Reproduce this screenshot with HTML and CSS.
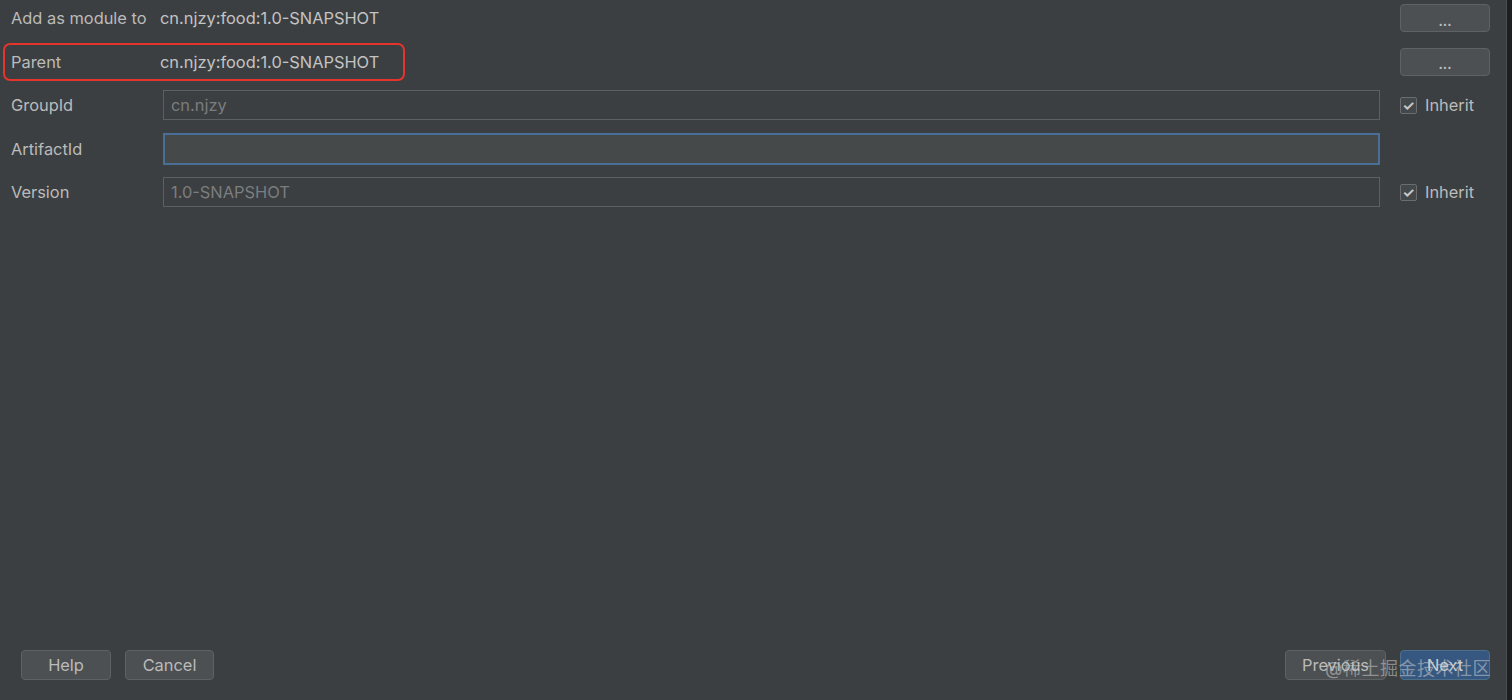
FILE: index.html
```html
<!DOCTYPE html>
<html lang="en">
<head>
    <meta charset="UTF-8">
    <meta name="viewport" content="width=device-width, initial-scale=1.0">
    <title>New Module</title>
    <link rel="stylesheet" href="styles.css">
</head>
<body>
    <div class="dialog">
        <div class="form">
            <div class="row">
                <span class="label">Add as module to</span>
                <span class="value">cn.njzy:food:1.0-SNAPSHOT</span>
                <div class="side"><button class="btn btn-dots">...</button></div>
            </div>

            <div class="row row-marked">
                <span class="label">Parent</span>
                <span class="value">cn.njzy:food:1.0-SNAPSHOT</span>
                <div class="side"><button class="btn btn-dots">...</button></div>
                <div class="mark"></div>
            </div>

            <div class="row">
                <label class="label" for="groupId">GroupId</label>
                <input class="field" id="groupId" type="text" value="cn.njzy" disabled>
                <div class="side">
                    <label class="check"><span class="box">&#10003;</span>Inherit</label>
                </div>
            </div>

            <div class="row">
                <label class="label" for="artifactId">ArtifactId</label>
                <input class="field field-focus" id="artifactId" type="text">
                <div class="side"></div>
            </div>

            <div class="row">
                <label class="label" for="version">Version</label>
                <input class="field" id="version" type="text" value="1.0-SNAPSHOT" disabled>
                <div class="side">
                    <label class="check"><span class="box">&#10003;</span>Inherit</label>
                </div>
            </div>
        </div>

        <div class="footer">
            <div class="group">
                <button class="btn btn-help">Help</button>
                <button class="btn btn-cancel">Cancel</button>
            </div>
            <div class="group">
                <button class="btn btn-prev">Previous</button>
                <button class="btn btn-next">Next</button>
            </div>
            <span class="watermark">@稀土掘金技术社区</span>
        </div>
    </div>
    <div class="edge"></div>
</body>
</html>
```

FILE: styles.css
```css
/* darcula 스타일 다이얼로그 */
body {
    margin: 0;
    height: 700px;
    display: flex;
    background-color: #3c3f41;
    color: #bbbbbb;
    font-family: Inter, "Liberation Sans", "Noto Sans CJK SC", sans-serif;
    font-size: 16.4px;
    overflow: hidden;
}

.dialog {
    flex: 1;
    display: flex;
    flex-direction: column;
    justify-content: space-between;
    padding: 3px 16px 20px 11px;
}

.edge {
    width: 5px;
    background-color: #1f1f20;
    border-left: 1px solid #4b4d4f;
}

.form {
    display: flex;
    flex-direction: column;
    gap: 13.5px;
}

.row {
    position: relative;
    display: flex;
    align-items: center;
    height: 30px;
}

.label {
    width: 149px;
    flex-shrink: 0;
}

.value {
    flex: 1;
    color: #c4c4c4;
}

.side {
    width: 90px;
    margin-left: 20px;
    flex-shrink: 0;
    display: flex;
    align-items: center;
}

/* 빨간 강조 박스 */
.mark {
    position: absolute;
    left: -8px;
    top: -4px;
    width: 398px;
    height: 34px;
    border: 2.5px solid #e5342b;
    border-radius: 7px;
    pointer-events: none;
}

.field {
    flex: 1;
    height: 30px;
    box-sizing: border-box;
    margin-left: 3px;
    padding: 0 7px;
    border: 1px solid #5d6062;
    background-color: #3c3f41;
    color: #7b7d7f;
    font-family: inherit;
    font-size: 16.4px;
    outline: none;
}

.field-focus {
    border: 2px solid #4a6f96;
    background-color: #45494a;
    height: 32px;
}

.check {
    display: flex;
    align-items: center;
    gap: 8px;
}

.box {
    width: 15px;
    height: 15px;
    border: 1px solid #6a6c6e;
    border-radius: 2px;
    background-color: #43494a;
    color: #c8c8c8;
    font-size: 14px;
    font-weight: bold;
    line-height: 15px;
    text-align: center;
}

.btn {
    height: 30px;
    box-sizing: border-box;
    border: 1px solid #5e6264;
    border-radius: 4px;
    background-color: #4c5052;
    color: #bbbbbb;
    font-family: inherit;
    font-size: 16.4px;
    padding: 0;
}

.btn-dots {
    width: 90px;
    height: 28px;
    font-size: 13px;
    font-weight: bold;
    padding-top: 5px;
}

.footer {
    position: relative;
    display: flex;
    justify-content: space-between;
    padding-left: 10px;
}

.group {
    display: flex;
    gap: 14px;
}

.btn-help {
    width: 90px;
}

.btn-cancel {
    width: 89px;
}

.btn-prev {
    width: 101px;
}

.btn-next {
    width: 90px;
    background-color: #365880;
    border-color: #4c708c;
    color: #c8ccd0;
}

.watermark {
    position: absolute;
    right: -1px;
    top: 4px;
    font-size: 18px;
    color: rgba(205, 205, 205, 0.55);
    letter-spacing: 0.5px;
    pointer-events: none;
}
```
